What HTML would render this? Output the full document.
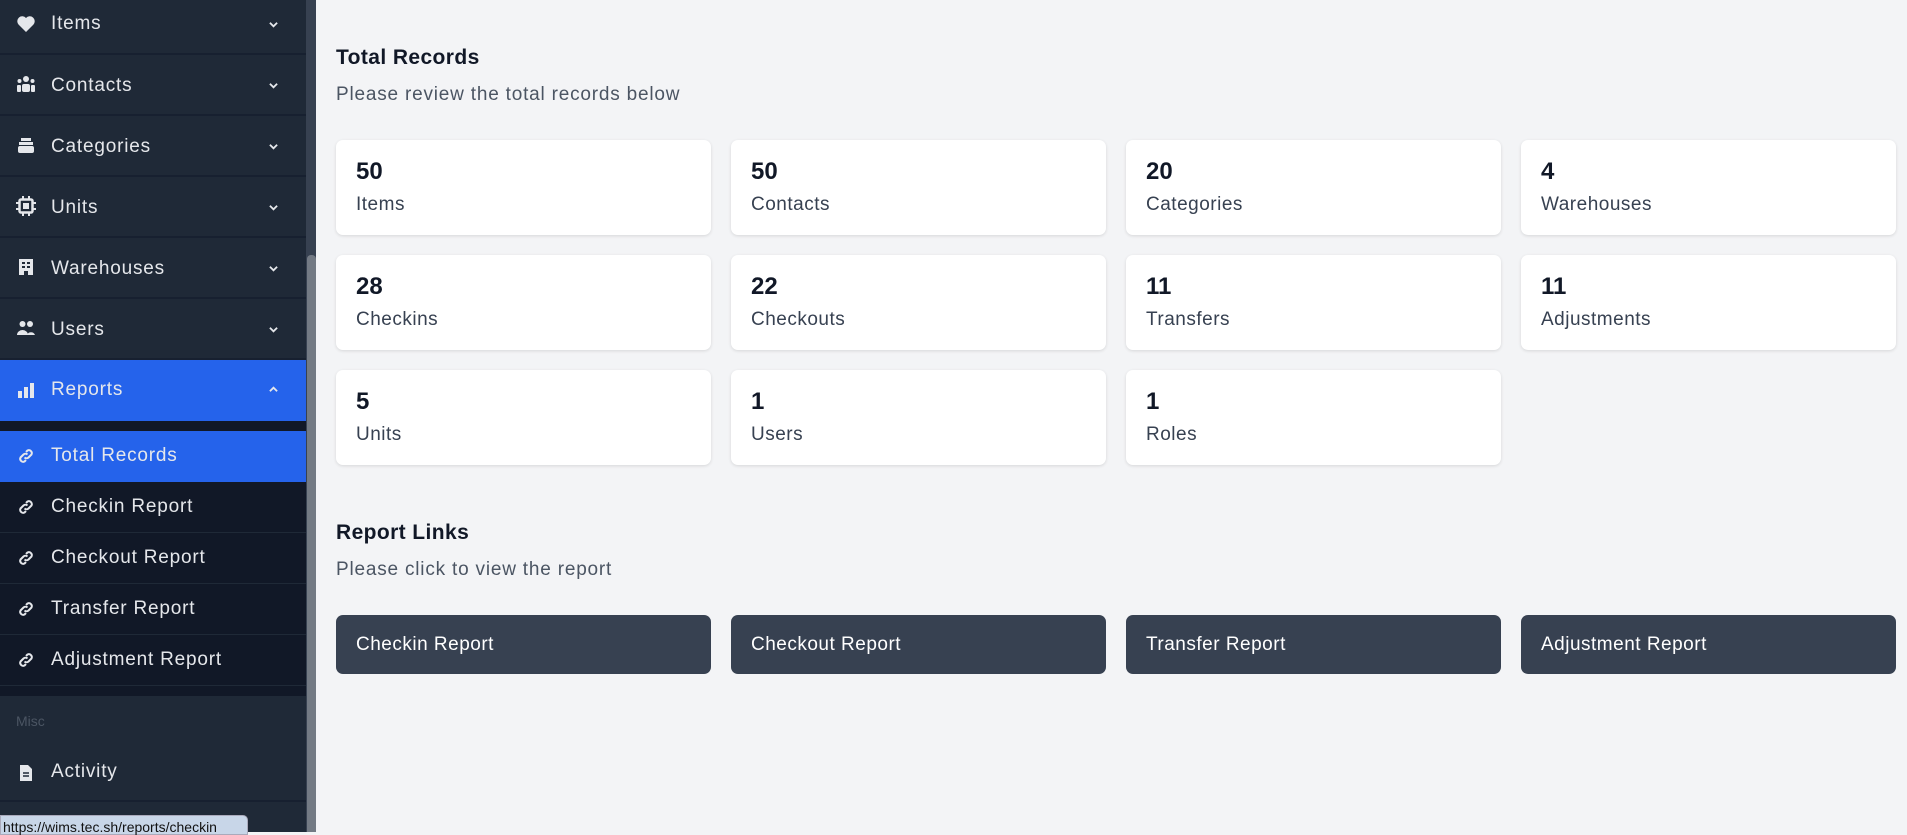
<!DOCTYPE html>
<html><head><meta charset="utf-8"><style>
*{box-sizing:border-box;margin:0;padding:0}
body{width:1907px;height:832px;overflow:hidden;background:#f3f4f6;font-family:"Liberation Sans",sans-serif;position:relative}
#sb{position:absolute;left:0;top:0;width:306px;height:832px;background:#1f2937}
.it{position:absolute;left:0;width:306px;color:#e5e7eb;font-size:19px;letter-spacing:0.8px;border-bottom:2px solid #172030}
.it .ic{position:absolute;left:16px;width:20px;height:20px}
.it .tx{position:absolute;left:51px}
.it .ch{position:absolute;left:269px;width:9px;height:9px}
.sub{background:#111827;border-bottom:1px solid #1f2937}
#track{position:absolute;left:306px;top:0;width:10px;height:832px;background:#374151}
#thumb{position:absolute;left:307px;top:255px;width:9px;height:577px;background:#737a84;border-radius:4px 4px 0 0}
.h{position:absolute;left:336px;font-size:21px;font-weight:bold;color:#111827;letter-spacing:0.4px}
.p{position:absolute;left:336px;font-size:19px;color:#4b5563;letter-spacing:0.8px}
.card{position:absolute;width:375px;height:95px;background:#fff;border-radius:7px;box-shadow:0 1px 3px rgba(0,0,0,.12)}
.card .n{position:absolute;left:20px;top:18px;font-size:24px;font-weight:bold;color:#111827}
.card .l{position:absolute;left:20px;top:54px;font-size:19px;color:#374151;letter-spacing:0.5px}
.btn{position:absolute;top:615px;width:375px;height:59px;background:#374151;border-radius:7px;color:#fff;font-size:19px;letter-spacing:0.5px;padding:19px 20px}
#tip{position:absolute;left:0;top:815px;width:248px;height:20px;background:#c8d6e8;border-radius:0 5px 0 0;font-size:14px;color:#111;padding:3px 2px;border:1px solid #aab}
</style></head><body>
<div id="sb">
<div class="it" style="top:0;height:55px"><svg class="ic" style="top:14px" viewBox="0 0 20 20"><path d="M10 18L2.5 10.5A4.5 4.5 0 0 1 10 4a4.5 4.5 0 0 1 7.5 6.5z" fill="#e5e7eb"/></svg><span class="tx" style="top:13px">Items</span><svg class="ch" style="top:20px" viewBox="0 0 10 10"><path d="M1 3l4 4 4-4" stroke="#e5e7eb" stroke-width="2" fill="none"/></svg></div>
<div class="it" style="top:55px;height:61px"><svg class="ic" style="top:19px" viewBox="0 0 20 20" fill="#e5e7eb"><circle cx="10" cy="5" r="3"/><circle cx="3.5" cy="7" r="2"/><circle cx="16.5" cy="7" r="2"/><rect x="6" y="10" width="8" height="8" rx="2"/><rect x="1" y="11" width="4" height="7" rx="1"/><rect x="15" y="11" width="4" height="7" rx="1"/></svg><span class="tx" style="top:20px">Contacts</span><svg class="ch" style="top:26px" viewBox="0 0 10 10"><path d="M1 3l4 4 4-4" stroke="#e5e7eb" stroke-width="2" fill="none"/></svg></div>
<div class="it" style="top:116px;height:61px"><svg class="ic" style="top:19px" viewBox="0 0 20 20" fill="#e5e7eb"><rect x="5" y="3" width="10" height="3"/><rect x="3" y="7" width="14" height="3"/><rect x="2" y="11" width="16" height="7" rx="2"/></svg><span class="tx" style="top:20px">Categories</span><svg class="ch" style="top:26px" viewBox="0 0 10 10"><path d="M1 3l4 4 4-4" stroke="#e5e7eb" stroke-width="2" fill="none"/></svg></div>
<div class="it" style="top:177px;height:61px"><svg class="ic" style="top:19px" viewBox="0 0 20 20"><rect x="3.5" y="3.5" width="13" height="13" rx="1.5" stroke="#e5e7eb" stroke-width="2.5" fill="none"/><rect x="7" y="7" width="6" height="6" fill="#e5e7eb"/><path d="M7 0v3M13 0v3M7 17v3M13 17v3M0 7h3M0 13h3M17 7h3M17 13h3" stroke="#e5e7eb" stroke-width="2"/></svg><span class="tx" style="top:20px">Units</span><svg class="ch" style="top:26px" viewBox="0 0 10 10"><path d="M1 3l4 4 4-4" stroke="#e5e7eb" stroke-width="2" fill="none"/></svg></div>
<div class="it" style="top:238px;height:61px"><svg class="ic" style="top:19px" viewBox="0 0 20 20"><path d="M3 2h14v16h-5v-4h-4v4H3z" fill="#e5e7eb"/><path d="M6 5h3v2H6zM11 5h3v2h-3zM6 9h3v2H6zM11 9h3v2h-3z" fill="#1f2937"/></svg><span class="tx" style="top:20px">Warehouses</span><svg class="ch" style="top:26px" viewBox="0 0 10 10"><path d="M1 3l4 4 4-4" stroke="#e5e7eb" stroke-width="2" fill="none"/></svg></div>
<div class="it" style="top:299px;height:61px"><svg class="ic" style="top:19px" viewBox="0 0 20 20" fill="#e5e7eb"><circle cx="6.5" cy="6" r="3"/><circle cx="14" cy="6" r="3"/><path d="M1 17a5.5 5 0 0 1 11 0zM11 17a4.5 5 0 0 1 8 0z"/></svg><span class="tx" style="top:20px">Users</span><svg class="ch" style="top:26px" viewBox="0 0 10 10"><path d="M1 3l4 4 4-4" stroke="#e5e7eb" stroke-width="2" fill="none"/></svg></div>
<div class="it" style="top:360px;height:61px;background:#2563eb;border:0"><svg class="ic" style="top:20px" viewBox="0 0 20 20" fill="#e5e7eb"><rect x="2" y="11" width="4" height="7"/><rect x="8" y="7" width="4" height="11"/><rect x="14" y="3" width="4" height="15"/></svg><span class="tx" style="top:19px">Reports</span><svg class="ch" style="top:25px" viewBox="0 0 10 10"><path d="M1 7l4-4 4 4" stroke="#e5e7eb" stroke-width="2" fill="none"/></svg></div>
<div style="position:absolute;top:421px;left:0;width:306px;height:275px;background:#111827"></div>
<div class="it" style="top:431px;height:51px;background:#2563eb;border:0"><svg class="ic" style="top:15px" viewBox="0 0 20 20" fill="none" stroke="#e5e7eb" stroke-width="2"><path d="M8.5 11.5a3 3 0 0 0 4 0l3-3a3 3 0 0 0-4-4l-1.5 1.5"/><path d="M11.5 8.5a3 3 0 0 0-4 0l-3 3a3 3 0 0 0 4 4l1.5-1.5"/></svg><span class="tx" style="top:14px">Total Records</span></div>
<div class="it sub" style="top:482px;height:51px"><svg class="ic" style="top:15px" viewBox="0 0 20 20" fill="none" stroke="#e5e7eb" stroke-width="2"><path d="M8.5 11.5a3 3 0 0 0 4 0l3-3a3 3 0 0 0-4-4l-1.5 1.5"/><path d="M11.5 8.5a3 3 0 0 0-4 0l-3 3a3 3 0 0 0 4 4l1.5-1.5"/></svg><span class="tx" style="top:14px">Checkin Report</span></div>
<div class="it sub" style="top:533px;height:51px"><svg class="ic" style="top:15px" viewBox="0 0 20 20" fill="none" stroke="#e5e7eb" stroke-width="2"><path d="M8.5 11.5a3 3 0 0 0 4 0l3-3a3 3 0 0 0-4-4l-1.5 1.5"/><path d="M11.5 8.5a3 3 0 0 0-4 0l-3 3a3 3 0 0 0 4 4l1.5-1.5"/></svg><span class="tx" style="top:14px">Checkout Report</span></div>
<div class="it sub" style="top:584px;height:51px"><svg class="ic" style="top:15px" viewBox="0 0 20 20" fill="none" stroke="#e5e7eb" stroke-width="2"><path d="M8.5 11.5a3 3 0 0 0 4 0l3-3a3 3 0 0 0-4-4l-1.5 1.5"/><path d="M11.5 8.5a3 3 0 0 0-4 0l-3 3a3 3 0 0 0 4 4l1.5-1.5"/></svg><span class="tx" style="top:14px">Transfer Report</span></div>
<div class="it sub" style="top:635px;height:51px"><svg class="ic" style="top:15px" viewBox="0 0 20 20" fill="none" stroke="#e5e7eb" stroke-width="2"><path d="M8.5 11.5a3 3 0 0 0 4 0l3-3a3 3 0 0 0-4-4l-1.5 1.5"/><path d="M11.5 8.5a3 3 0 0 0-4 0l-3 3a3 3 0 0 0 4 4l1.5-1.5"/></svg><span class="tx" style="top:14px">Adjustment Report</span></div>
<div style="position:absolute;top:713px;left:16px;color:#4b5563;font-size:14px">Misc</div>
<div class="it" style="top:746px;height:56px"><svg class="ic" style="top:17px" viewBox="0 0 20 20"><path d="M4 2h8l4 4v12H4z" fill="#e5e7eb"/><path d="M7 10h6M7 13h6" stroke="#1f2937" stroke-width="1.5"/></svg><span class="tx" style="top:15px">Activity</span></div>
</div>
<div id="track"></div><div id="thumb"></div>
<div id="tip">https://wims.tec.sh/reports/checkin</div>

<div class="h" style="top:46px">Total Records</div>
<div class="p" style="top:84px">Please review the total records below</div>

<div class="card" style="left:336px;top:140px"><div class="n">50</div><div class="l">Items</div></div>
<div class="card" style="left:731px;top:140px"><div class="n">50</div><div class="l">Contacts</div></div>
<div class="card" style="left:1126px;top:140px"><div class="n">20</div><div class="l">Categories</div></div>
<div class="card" style="left:1521px;top:140px"><div class="n">4</div><div class="l">Warehouses</div></div>
<div class="card" style="left:336px;top:255px"><div class="n">28</div><div class="l">Checkins</div></div>
<div class="card" style="left:731px;top:255px"><div class="n">22</div><div class="l">Checkouts</div></div>
<div class="card" style="left:1126px;top:255px"><div class="n">11</div><div class="l">Transfers</div></div>
<div class="card" style="left:1521px;top:255px"><div class="n">11</div><div class="l">Adjustments</div></div>
<div class="card" style="left:336px;top:370px"><div class="n">5</div><div class="l">Units</div></div>
<div class="card" style="left:731px;top:370px"><div class="n">1</div><div class="l">Users</div></div>
<div class="card" style="left:1126px;top:370px"><div class="n">1</div><div class="l">Roles</div></div>

<div class="h" style="top:521px">Report Links</div>
<div class="p" style="top:559px">Please click to view the report</div>

<div class="btn" style="left:336px">Checkin Report</div>
<div class="btn" style="left:731px">Checkout Report</div>
<div class="btn" style="left:1126px">Transfer Report</div>
<div class="btn" style="left:1521px">Adjustment Report</div>
</body></html>
